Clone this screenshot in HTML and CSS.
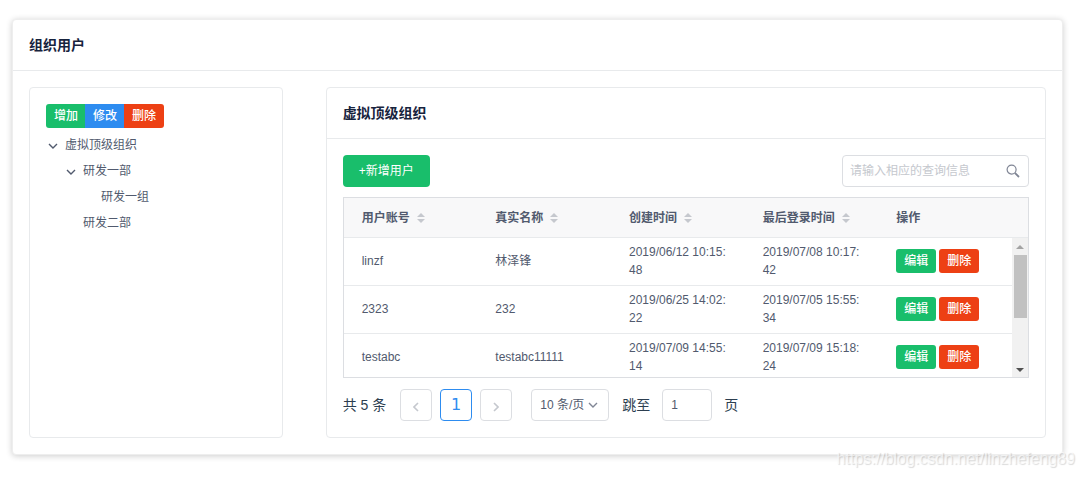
FILE: index.html
```html
<!DOCTYPE html>
<html lang="zh-CN">
<head>
<meta charset="utf-8">
<meta name="viewport" content="width=device-width, initial-scale=1">
<title>组织用户</title>
<link rel="stylesheet" href="styles.css">
</head>
<body>
<svg class="defs" aria-hidden="true">
  <symbol id="chevron" viewBox="0 0 10 6"><path d="M1 1l4 4 4-4" fill="none" stroke="currentColor" stroke-width="1.4"/></symbol>
  <symbol id="sort" viewBox="0 0 8 10"><path d="M4 0l4 4H0zM0 6h8l-4 4z" fill="currentColor"/></symbol>
</svg>
<main class="card page-card">
  <h1 class="card-head">组织用户</h1>
  <div class="card-body columns">
    <section class="card">
      <div class="card-body">
        <div class="btn-group">
          <button class="btn btn-small success" type="button">增加</button>
          <button class="btn btn-small primary" type="button">修改</button>
          <button class="btn btn-small error" type="button">删除</button>
        </div>
        <ul class="tree">
          <li>
            <div class="node"><svg class="arrow"><use href="#chevron"/></svg><span>虚拟顶级组织</span></div>
            <ul>
              <li>
                <div class="node"><svg class="arrow"><use href="#chevron"/></svg><span>研发一部</span></div>
                <ul>
                  <li><div class="node leaf"><span>研发一组</span></div></li>
                </ul>
              </li>
              <li><div class="node leaf"><span>研发二部</span></div></li>
            </ul>
          </li>
        </ul>
      </div>
    </section>
    <section class="card users">
      <h2 class="card-head">虚拟顶级组织</h2>
      <div class="card-body">
        <div class="toolbar">
          <button class="btn btn-normal success" type="button">+新增用户</button>
          <label class="search">
            <input type="text" placeholder="请输入相应的查询信息" aria-label="查询信息">
            <svg class="search-icon" viewBox="0 0 14 14" aria-hidden="true"><circle cx="5.6" cy="5.6" r="4.5" fill="none" stroke="currentColor" stroke-width="1.2"/><path d="M9 9l4 4" stroke="currentColor" stroke-width="1.8"/></svg>
          </label>
        </div>
        <div class="table-box">
          <div class="table-head">
            <table>
              <thead>
                <tr>
                  <th>用户账号<svg class="sort"><use href="#sort"/></svg></th>
                  <th>真实名称<svg class="sort"><use href="#sort"/></svg></th>
                  <th>创建时间<svg class="sort"><use href="#sort"/></svg></th>
                  <th>最后登录时间<svg class="sort"><use href="#sort"/></svg></th>
                  <th>操作</th>
                </tr>
              </thead>
            </table>
          </div>
          <div class="table-view">
            <div class="table-rows">
              <table>
                <tbody>
                  <tr>
                    <td>linzf</td><td>林泽锋</td><td>2019/06/12 10:15:48</td><td>2019/07/08 10:17:42</td>
                    <td class="ops"><div class="actions"><button class="btn btn-small success" type="button">编辑</button><button class="btn btn-small error" type="button">删除</button></div></td>
                  </tr>
                  <tr>
                    <td>2323</td><td>232</td><td>2019/06/25 14:02:22</td><td>2019/07/05 15:55:34</td>
                    <td class="ops"><div class="actions"><button class="btn btn-small success" type="button">编辑</button><button class="btn btn-small error" type="button">删除</button></div></td>
                  </tr>
                  <tr>
                    <td>testabc</td><td>testabc11111</td><td>2019/07/09 14:55:14</td><td>2019/07/09 15:18:24</td>
                    <td class="ops"><div class="actions"><button class="btn btn-small success" type="button">编辑</button><button class="btn btn-small error" type="button">删除</button></div></td>
                  </tr>
                </tbody>
              </table>
            </div>
            <div class="scrollbar" aria-hidden="true">
              <svg class="scroll-arrow dim" viewBox="0 0 8 4"><path d="M4 0l4 4H0z" fill="currentColor"/></svg>
              <div class="track"><div class="thumb"></div></div>
              <svg class="scroll-arrow" viewBox="0 0 8 4"><path d="M0 0h8l-4 4z" fill="currentColor"/></svg>
            </div>
          </div>
        </div>
        <nav class="pager" aria-label="分页">
          <span class="total">共 5 条</span>
          <div class="pages">
            <button class="page" type="button" disabled aria-label="上一页"><svg class="page-icon" viewBox="0 0 6 10"><path d="M5 1L1 5l4 4" fill="none" stroke="currentColor" stroke-width="1.6"/></svg></button>
            <button class="page current" type="button" aria-current="page">1</button>
            <button class="page" type="button" disabled aria-label="下一页"><svg class="page-icon" viewBox="0 0 6 10"><path d="M1 1l4 4-4 4" fill="none" stroke="currentColor" stroke-width="1.6"/></svg></button>
          </div>
          <div class="size">
            <select aria-label="每页条数"><option>10 条/页</option></select>
            <svg class="size-arrow"><use href="#chevron"/></svg>
          </div>
          <label class="jump">跳至<input type="text" value="1">页</label>
        </nav>
      </div>
    </section>
  </div>
</main>
<div class="watermark">https://blog.csdn.net/linzhefeng89</div>
</body>
</html>
```
FILE: styles.css
```css
* { box-sizing: border-box; }

body {
  margin: 0;
  padding: 19px 21px 20px 12px;
  background: #fff;
  color: #515a6e;
  font: 12px/18px "Liberation Sans", "Noto Sans CJK SC", sans-serif;
}

button, input, select { font: inherit; color: inherit; margin: 0; }
ul { list-style: none; margin: 0; padding: 0; }
.defs { position: absolute; width: 0; height: 0; }

.card { border: 1px solid #e8eaec; border-radius: 4px; background: #fff; min-width: 0; }
.page-card { border-color: #eee; box-shadow: 0 1px 6px rgba(0, 0, 0, .2); }
.card-head {
  margin: 0;
  padding: 14px 16px;
  border-bottom: 1px solid #e8eaec;
  color: #17233d;
  font-size: 14px;
  line-height: 22px;
  font-weight: 700;
}
.card-body { padding: 16px; }
.columns { display: grid; grid-template-columns: 6fr 1fr 17fr; }
.users { grid-column: 3; }

.btn { border: 0; border-radius: 3px; color: #fff; cursor: pointer; white-space: nowrap; }
.btn-small { height: 24px; padding: 0 8px; font-weight: 500; }
.btn-normal { height: 32px; padding: 0 16px; border-radius: 4px; }
.success { background: #19be6b; }
.primary { background: #2d8cf0; }
.error { background: #ed4014; }

.btn-group { display: flex; width: max-content; border-radius: 3px; overflow: hidden; }
.btn-group .btn { border-radius: 0; }
.btn-group .btn + .btn { margin-left: -1px; }

.tree { margin-top: 8px; }
.tree ul { padding-left: 18px; }
.node { display: flex; align-items: center; gap: 7px; height: 18px; margin-bottom: 8px; padding-left: 2px; }
.node.leaf { padding-left: 19px; }
.arrow { width: 10px; height: 6px; margin-top: 2px; }

.toolbar { display: flex; justify-content: space-between; margin-bottom: 10px; }
.search {
  display: flex;
  align-items: center;
  width: 187px;
  height: 32px;
  padding: 0 8px 0 7px;
  border: 1px solid #dcdee2;
  border-radius: 4px;
}
.search input { flex: 1; min-width: 0; padding: 0; border: 0; outline: 0; background: none; }
.search input::placeholder { color: #c5c8ce; opacity: 1; }
.search-icon { width: 14px; height: 14px; color: #808695; }

.table-box { border: 1px solid #dcdee2; }
.table-head { padding-right: 16px; background: #f8f8f9; border-bottom: 1px solid #e8eaec; }
table { width: 100%; table-layout: fixed; border-spacing: 0; }
th { height: 39px; padding: 0 18px; text-align: left; font-weight: 700; white-space: nowrap; }
.sort { width: 8px; height: 10px; margin-left: 7px; color: #c5c8ce; vertical-align: -1px; }
td { height: 48px; padding: 0 18px 2px; border-bottom: 1px solid #e8eaec; word-break: break-all; }
td.ops { padding-right: 0; }
.actions { display: flex; gap: 3px; }

.table-view { display: flex; height: 139px; }
.table-rows { flex: 1; min-width: 0; overflow: hidden; }
.scrollbar { display: flex; flex-direction: column; align-items: center; width: 16px; padding: 7px 0 5px; background: #f1f1f1; }
.scroll-arrow { width: 8px; height: 4px; color: #505050; }
.scroll-arrow.dim { color: #a3a3a3; }
.track { flex: 1; padding-top: 6px; }
.thumb { width: 13px; height: 63px; background: #c1c1c1; }

.pager { display: flex; align-items: center; margin-top: 11px; color: #2c3e50; font-size: 14px; }
.pages { display: flex; gap: 8px; margin-left: 14px; }
.page {
  display: flex;
  align-items: center;
  justify-content: center;
  width: 32px;
  height: 32px;
  padding: 0;
  border: 1px solid #dcdee2;
  border-radius: 4px;
  background: #fff;
  color: #c5c8ce;
}
.page.current { border-color: #2d8cf0; color: #2d8cf0; font: 16px/30px "DejaVu Sans", sans-serif; }
.page-icon { width: 6px; height: 10px; margin-top: 4px; }
.size { display: grid; align-items: center; margin-left: 19px; color: #515a6e; font-size: 12px; }
.size select {
  grid-area: 1 / 1;
  appearance: none;
  width: 78px;
  height: 32px;
  padding: 0 20px 0 8px;
  border: 1px solid #dcdee2;
  border-radius: 4px;
  background: #fff;
}
.size-arrow { grid-area: 1 / 1; justify-self: end; width: 10px; height: 6px; margin-right: 11px; color: #808695; pointer-events: none; }
.jump { display: flex; align-items: center; gap: 12px; margin-left: 13px; }
.jump input {
  width: 50px;
  height: 32px;
  padding: 0 8px;
  border: 1px solid #dcdee2;
  border-radius: 4px;
  color: #515a6e;
  font-size: 12px;
}

.watermark {
  position: absolute;
  right: 9px;
  bottom: 8px;
  color: rgba(255, 255, 255, .6);
  font-size: 16px;
  line-height: 20px;
  text-shadow: 1px 1px 1px rgba(0, 0, 0, .15);
}
```
